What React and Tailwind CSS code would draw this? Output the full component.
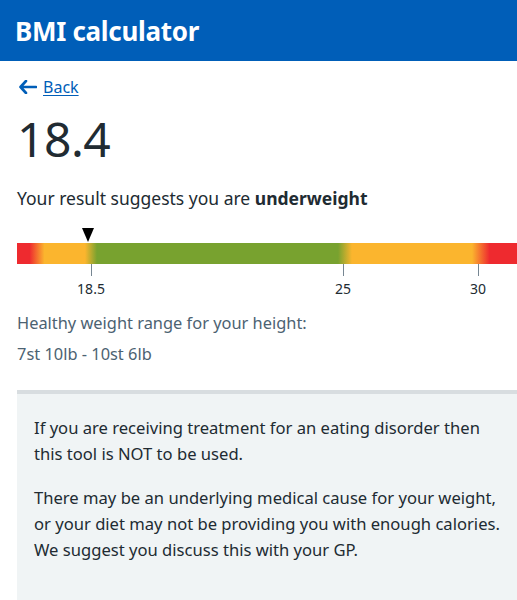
export default function App() {
  const font = { fontFamily: '"Noto Sans", sans-serif' };
  return (
    <div className="min-h-screen bg-white text-[#212b32]" style={font}>
      {/* Header */}
      <header className="bg-[#005eb8] h-[61px] flex items-center px-[15px]">
        <h1 className="text-[26px] font-bold text-white leading-none tracking-[-0.3px]">BMI calculator</h1>
      </header>

      <main className="pl-[17px]">
        {/* Back link */}
        <a href="#" className="mt-[14px] flex items-center gap-[6px] text-[#005eb8] text-[16px]">
          <svg width="18" height="14" viewBox="0 0 18 14" className="ml-[2px]">
            <path d="M7 1 L1.5 7 L7 13 M1.5 7 H17" stroke="#005eb8" strokeWidth="2.6" fill="none" strokeLinecap="round" strokeLinejoin="round" />
          </svg>
          <span className="underline underline-offset-2">Back</span>
        </a>

        <div className="mt-[16px] text-[48px] leading-none tracking-[-0.5px]">18.4</div>

        <p className="mt-[22px] text-[17.5px]">
          Your result suggests you are <span className="font-bold">underweight</span>
        </p>

        {/* Scale */}
        <div className="mt-[17px] relative">
          <div className="h-[14px] relative">
            <svg width="12" height="14" viewBox="0 0 12 14" className="absolute left-[65px] top-0">
              <path d="M0 0 H12 L6 14 Z" fill="#000" />
            </svg>
          </div>
          <div className="h-[21px] mt-[1px] bg-[linear-gradient(to_right,#ee2a2f_0%,#ee2a2f_2.5%,#fbb52e_5.5%,#fbb52e_13.6%,#78a22f_16%,#78a22f_64.2%,#fbb52e_67%,#fbb52e_91%,#ee2a2f_94.5%,#ee2a2f_100%)]" />
          <div className="relative h-[36px]">
            <div className="absolute left-[73px] top-0 flex flex-col items-center w-[2px]">
              <div className="w-px h-[12px] bg-[#768692]" />
              <span className="mt-[2px] text-[14px] whitespace-nowrap">18.5</span>
            </div>
            <div className="absolute left-[325px] top-0 flex flex-col items-center w-[2px]">
              <div className="w-px h-[12px] bg-[#768692]" />
              <span className="mt-[2px] text-[14px] whitespace-nowrap">25</span>
            </div>
            <div className="absolute left-[460px] top-0 flex flex-col items-center w-[2px]">
              <div className="w-px h-[12px] bg-[#768692]" />
              <span className="mt-[2px] text-[14px] whitespace-nowrap">30</span>
            </div>
          </div>
        </div>

        <p className="mt-[11px] text-[16.4px] text-[#4c6272]">Healthy weight range for your height:</p>
        <p className="mt-[6px] text-[16.4px] text-[#4c6272]">7st 10lb - 10st 6lb</p>

        {/* Warning box */}
        <div className="mt-[24px] bg-[#f0f4f5] border-t-4 border-[#d8dde0] pl-[17px] pr-[16px] pt-[21px] pb-[40px] text-[16.6px] leading-[26px]">
          <p>If you are receiving treatment for an eating disorder then this tool is NOT to be used.</p>
          <p className="mt-[18px]">
            There may be an underlying medical cause for your weight, or your diet may not be providing you with enough calories. We suggest you discuss this with your GP.
          </p>
        </div>
      </main>
    </div>
  );
}
